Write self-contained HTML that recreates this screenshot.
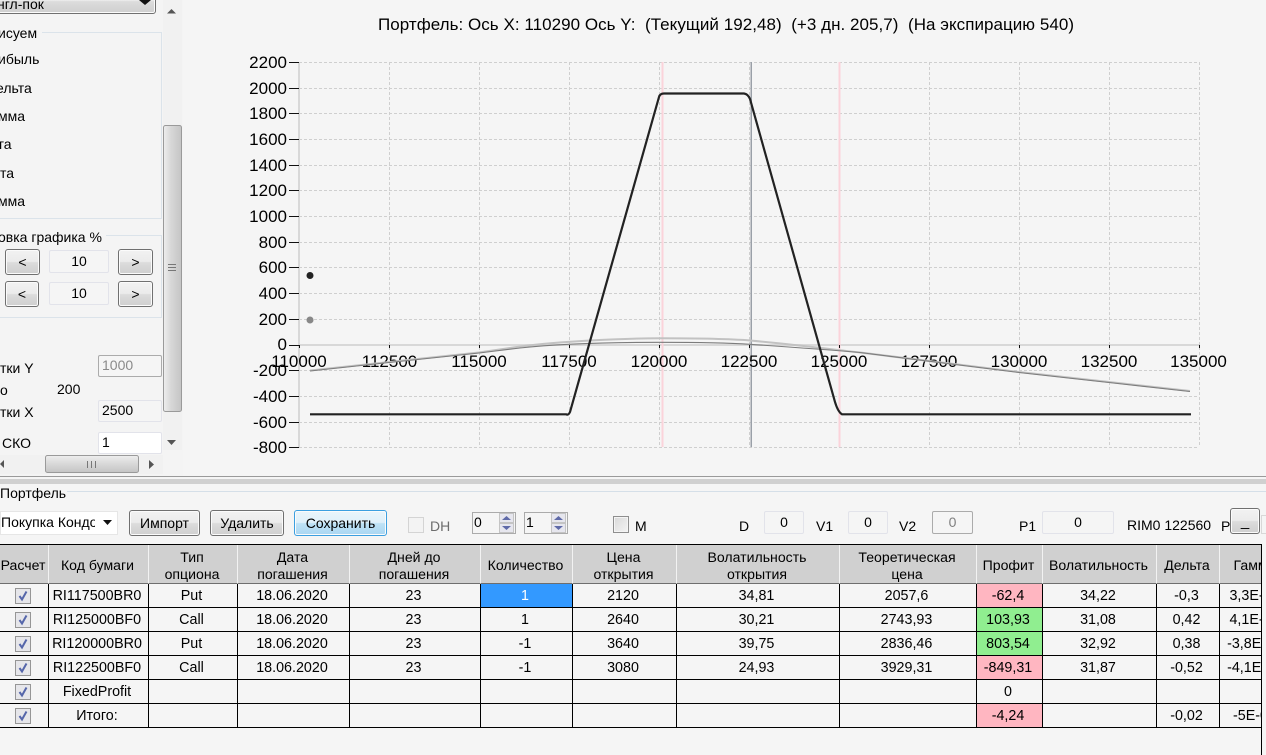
<!DOCTYPE html>
<html><head><meta charset="utf-8">
<style>
html,body{margin:0;padding:0;background:#f5f5f5;}
body{width:1266px;height:755px;overflow:hidden;position:relative;font:14px/16px "Liberation Sans",sans-serif;color:#000;}
.a{position:absolute;box-sizing:border-box;}
.t{position:absolute;white-space:nowrap;}
.btn{position:absolute;box-sizing:border-box;border:1px solid #707070;border-radius:3px;background:linear-gradient(#f2f2f2 0,#ebebeb 48%,#dcdcdc 52%,#cfcfcf 100%);text-align:center;box-shadow:inset 0 0 0 1px #fbfbfb;}
.box{position:absolute;box-sizing:border-box;border:1px solid #e2e3ea;border-radius:2px;background:#f5f5f5;text-align:center;}
table{border-collapse:separate;border-spacing:0;table-layout:fixed;position:absolute;left:0;top:0;width:1300px;}
td,th{box-sizing:border-box;padding:1px 3px 0 0;text-align:center;font-weight:normal;border-right:1px solid #000;border-bottom:1px solid #000;height:24px;overflow:hidden;white-space:nowrap;font-size:14.3px;line-height:17px;}
th{background:#d0d0d0;height:39px;padding:3px 2px 0 0;border-right:1px solid #f2f2f2;border-bottom:1px solid #6e6e6e;white-space:normal;font-size:14.1px;}
td.k{padding:0;}
.r{background:#ffb6c1}.g{background:#90ee90}.s{background:#3399ff;color:#fff}
.c{display:block;margin:0 auto;position:relative;left:-1px;}
</style></head><body>

<svg class="a" style="left:0;top:0" width="1266" height="476" font-family="Liberation Sans, sans-serif">
<text x="378" y="30" font-size="17" textLength="696" xml:space="preserve">Портфель: Ось X: 110290 Ось Y:  (Текущий 192,48)  (+3 дн. 205,7)  (На экспирацию 540)</text>
<g stroke="#cfcfcf" stroke-width="1" stroke-dasharray="3 2" fill="none" shape-rendering="crispEdges">
<path d="M299 62.500H1199M299 88.500H1199M299 113.500H1199M299 139.500H1199M299 165.500H1199M299 190.500H1199M299 216.500H1199M299 242.500H1199M299 267.500H1199M299 293.500H1199M299 319.500H1199M299 370.500H1199M299 396.500H1199M299 422.500H1199M299 447.500H1199"/>
<path d="M389.500 62V447M479.500 62V447M569.500 62V447M659.500 62V447M749.500 62V447M839.500 62V447M929.500 62V447M1019.500 62V447M1109.500 62V447M1199.500 62V447"/>
</g>
<rect x="298" y="62" width="2" height="385" fill="#d8d8d8"/>
<rect x="299" y="344" width="900" height="2" fill="#d8d8d8"/>
<rect x="661.500" y="62" width="2" height="385" fill="#fbd3da"/>
<rect x="838.500" y="62" width="2" height="385" fill="#fbd3da"/>
<rect x="750.500" y="62" width="1.500" height="385" fill="#9aa0a8"/>
<g stroke="#111" stroke-width="1" shape-rendering="crispEdges">
<path d="M289 62.500H299M289 88.500H299M289 113.500H299M289 139.500H299M289 165.500H299M289 190.500H299M289 216.500H299M289 242.500H299M289 267.500H299M289 293.500H299M289 319.500H299M289 345.500H299M289 370.500H299M289 396.500H299M289 422.500H299M289 447.500H299"/>
<path d="M299.500 345V348M389.500 345V348M479.500 345V348M569.500 345V348M659.500 345V348M749.500 345V348M839.500 345V348M929.500 345V348M1019.500 345V348M1109.500 345V348M1199.500 345V348"/>
</g>
<g font-size="17" text-anchor="end">
<text x="287" y="68">2200</text><text x="287" y="94">2000</text><text x="287" y="119">1800</text><text x="287" y="145">1600</text><text x="287" y="171">1400</text><text x="287" y="196">1200</text><text x="287" y="222">1000</text><text x="287" y="248">800</text><text x="287" y="273">600</text><text x="287" y="299">400</text><text x="287" y="325">200</text><text x="287" y="350">0</text><text x="287" y="376">-200</text><text x="287" y="402">-400</text><text x="287" y="428">-600</text><text x="287" y="453">-800</text>
</g>
<g font-size="17" text-anchor="middle">
<text x="299" y="367">110000</text><text x="389.500" y="367">112500</text><text x="479" y="367">115000</text><text x="569" y="367">117500</text><text x="659" y="367">120000</text><text x="749" y="367">122500</text><text x="839" y="367">125000</text><text x="929" y="367">127500</text><text x="1019" y="367">130000</text><text x="1109" y="367">132500</text><text x="1198.500" y="367">135000</text>
</g>
<path d="M310 370.500L389 362L479 352.500L520 346.500C560 341.500 620 338.300 660 338.300C700 338.300 730 339 750 340.500C790 344 825 348.500 860 352.500C920 360 970 366 1019 372L1109 382L1190 391" fill="none" stroke="#c2c2c2" stroke-width="2"/>
<path d="M310 371L389 362.500L479 353L520 348C560 343.500 620 342.300 660 342.300C700 342.300 730 343 750 344.300C790 347 825 349.500 860 352.500C920 360 970 366.500 1019 372.500L1109 382.500L1190 391.500" fill="none" stroke="#7c7c7c" stroke-width="1.100"/>
<path d="M310 414.300H566Q568.500 415.500 570 412L659 97Q660 93.500 664 93.500H744Q748 94 750 99L835 402Q838 412 842 414.300H1191" fill="none" stroke="#222" stroke-width="2.200"/>
<circle cx="310" cy="275.500" r="3.500" fill="#222"/>
<circle cx="310" cy="320" r="3.500" fill="#888"/>

<!-- left panel -->
<rect x="0" y="0" width="183" height="476" fill="#f4f4f4"/>
<rect x="163" y="0" width="19" height="450" fill="#f1f1f1"/>
<path d="M167 13.500H176L171.500 9Z" fill="#555"/>
<path d="M167 440H176L171.500 445Z" fill="#555"/>
<rect x="163.500" y="125.500" width="18" height="286" rx="2" fill="url(#sb)" stroke="#9a9a9a"/>
<path d="M168 264.500H176M168 267.500H176M168 270.500H176" stroke="#777" fill="none" shape-rendering="crispEdges"/>
<rect x="0" y="455" width="163" height="19" fill="#f1f1f1"/>
<path d="M4 460V468L0 464Z" fill="#555"/>
<path d="M149 460V469L154 464.500Z" fill="#555"/>
<rect x="45.500" y="455.500" width="93" height="17" rx="2" fill="url(#sh)" stroke="#9a9a9a"/>
<path d="M87.500 461V468M91.500 461V468M95.500 461V468" stroke="#777" fill="none" shape-rendering="crispEdges"/>
<defs>
<linearGradient id="sb" x1="0" x2="1" y1="0" y2="0"><stop offset="0" stop-color="#eee"/><stop offset=".4" stop-color="#d8d8d8"/><stop offset="1" stop-color="#c4c4c4"/></linearGradient>
<linearGradient id="sh" x1="0" x2="0" y1="0" y2="1"><stop offset="0" stop-color="#eee"/><stop offset=".4" stop-color="#dcdcdc"/><stop offset="1" stop-color="#c4c4c4"/></linearGradient>
</defs>
<path d="M42 32.500H161.500V218.500H0M106 235.500H161.500V317.500H0" fill="none" stroke="#dbe3ea" shape-rendering="crispEdges"/>
</svg>

<!-- left panel controls -->
<div class="btn" style="left:-6px;top:-12px;width:162px;height:26px;"></div>
<span class="t" style="left:-3px;top:-4px;">нгл-пок</span>
<svg class="a" style="left:139px;top:0" width="14" height="6"><path d="M0 0H12L6 5Z" fill="#111"/></svg>
<span class="t" style="left:-2px;top:25px">исуем</span>
<span class="t" style="left:-2px;top:51px">ибыль</span>
<span class="t" style="left:-4px;top:80px">ельта</span>
<span class="t" style="left:-2px;top:108px">мма</span>
<span class="t" style="left:-1px;top:136px">га</span>
<span class="t" style="left:0;top:165px">та</span>
<span class="t" style="left:-2px;top:193px">мма</span>
<span class="t" style="left:-2px;top:229px">овка графика %</span>
<div class="btn" style="left:5px;top:249px;width:35px;height:26px;line-height:24px">&lt;</div>
<div class="box" style="left:49px;top:250px;width:60px;height:23px;line-height:20px">10</div>
<div class="btn" style="left:118px;top:249px;width:35px;height:26px;line-height:24px">&gt;</div>
<div class="btn" style="left:5px;top:281px;width:34px;height:26px;line-height:24px">&lt;</div>
<div class="box" style="left:49px;top:282px;width:60px;height:23px;line-height:20px">10</div>
<div class="btn" style="left:118px;top:281px;width:35px;height:26px;line-height:24px">&gt;</div>
<span class="t" style="left:0;top:360px">тки Y</span>
<div class="box" style="left:98px;top:355px;width:64px;height:22px;border-color:#ababab;text-align:left;padding-left:3px;line-height:19px;color:#8a8a8a">1000</div>
<span class="t" style="left:0;top:382px">о</span>
<span class="t" style="left:57px;top:381px">200</span>
<span class="t" style="left:0;top:404px">тки X</span>
<div class="box" style="left:98px;top:400px;width:64px;height:22px;text-align:left;padding-left:3px;line-height:19px">2500</div>
<span class="t" style="left:2px;top:435px">СКО</span>
<div class="box" style="left:98px;top:432px;width:64px;height:22px;background:#fff;text-align:left;padding-left:3px;line-height:19px">1</div>

<!-- splitter -->
<div class="a" style="left:0;top:476px;width:1266px;height:1px;background:#9a9a9a"></div>
<div class="a" style="left:0;top:477px;width:1266px;height:2px;background:#f5f5f5"></div>
<div class="a" style="left:0;top:479px;width:1266px;height:5px;background:#d0d0d0"></div>

<!-- toolbar -->
<span class="t" style="left:0;top:485px">Портфель</span>
<div class="a" style="left:67px;top:491px;width:1199px;height:1px;background:#d5dfe8"></div>
<div class="a" style="left:0;top:511px;width:118px;height:24px;background:#fff;border:1px solid #e6e6e6;overflow:hidden;line-height:21px;"><span style="display:block;width:94px;overflow:hidden;white-space:nowrap;">Покупка Кондор</span></div>
<svg class="a" style="left:103px;top:520px" width="10" height="6"><path d="M0 0H9L4.500 5Z" fill="#111"/></svg>
<div class="btn" style="left:129px;top:510px;width:71px;height:26px;line-height:24px">Импорт</div>
<div class="btn" style="left:210px;top:510px;width:74px;height:26px;line-height:24px">Удалить</div>
<div class="btn" style="left:294px;top:510px;width:93px;height:26px;line-height:24px;border-color:#3c9fe0;background:linear-gradient(#eaf5fb,#dff0fa 48%,#bfe2f6 52%,#a9d6f2)">Сохранить</div>
<div class="a" style="left:408px;top:517px;width:16px;height:16px;border:1px solid #d4d4d4;background:#f3f3f3"></div>
<span class="t" style="left:430px;top:518px;color:#6d6d6d">DH</span>
<div class="a" style="left:472px;top:512px;width:44px;height:22px;border:1px solid #ababab;line-height:18px;padding-left:1px;">0</div>
<div class="a" style="left:524px;top:512px;width:44px;height:22px;border:1px solid #ababab;line-height:18px;padding-left:1px;">1</div>
<svg class="a" style="left:499px;top:513px" width="16" height="20"><rect x=".5" y=".5" width="14" height="9" fill="#e6e6ee" stroke="#c4c4c4"/><rect x=".5" y="10.500" width="14" height="9" fill="#e6e6ee" stroke="#c4c4c4"/><path d="M3 7H12L7.500 3ZM3 13H12L7.500 17Z" fill="#5f6aa8"/></svg>
<svg class="a" style="left:551px;top:513px" width="16" height="20"><rect x=".5" y=".5" width="14" height="9" fill="#e6e6ee" stroke="#c4c4c4"/><rect x=".5" y="10.500" width="14" height="9" fill="#e6e6ee" stroke="#c4c4c4"/><path d="M3 7H12L7.500 3ZM3 13H12L7.500 17Z" fill="#5f6aa8"/></svg>
<div class="a" style="left:613px;top:516px;width:16px;height:17px;border:1px solid #8e8e8e;background:linear-gradient(135deg,#d8d8d8,#f4f4f4);box-shadow:inset 0 0 0 1px #f4f4f4"></div>
<span class="t" style="left:635px;top:518px">M</span>
<span class="t" style="left:739px;top:518px">D</span>
<div class="box" style="left:764px;top:511px;width:40px;height:23px;line-height:20px">0</div>
<span class="t" style="left:816px;top:518px">V1</span>
<div class="box" style="left:848px;top:511px;width:40px;height:23px;line-height:20px">0</div>
<span class="t" style="left:899px;top:518px">V2</span>
<div class="box" style="left:932px;top:511px;width:41px;height:23px;line-height:20px;border-color:#ababab;color:#7f7f7f">0</div>
<span class="t" style="left:1019px;top:518px">P1</span>
<div class="box" style="left:1042px;top:511px;width:72px;height:23px;line-height:20px">0</div>
<span class="t" style="left:1127px;top:517px">RIM0 122560</span>
<span class="t" style="left:1221px;top:518px">P</span>
<div class="btn" style="left:1230px;top:508px;width:30px;height:26px;line-height:26px;font-size:15px;">_</div>
<div class="a" style="left:1261px;top:515px;width:5px;height:19px;border:1px solid #d8d8d8;border-right:0"></div>

<!-- table -->
<div class="a" style="left:0;top:544px;width:1262px;height:211px;border-top:1px solid #000;border-right:1px solid #000;overflow:hidden;">
<table>
<colgroup><col style="width:49px"><col style="width:100px"><col style="width:89px"><col style="width:112px"><col style="width:131px"><col style="width:92px"><col style="width:104px"><col style="width:163px"><col style="width:137px"><col style="width:66px"><col style="width:114px"><col style="width:63px"><col style="width:80px"></colgroup>
<tr><th>Расчет</th><th>Код бумаги</th><th>Тип<br>опциона</th><th>Дата<br>погашения</th><th>Дней до<br>погашения</th><th>Количество</th><th>Цена<br>открытия</th><th>Волатильность<br>открытия</th><th>Теоретическая<br>цена</th><th>Профит</th><th>Волатильность</th><th>Дельта</th><th style="padding-right:10px">Гамма</th></tr>
<tr><td class="k"><svg class="c" width="16" height="16"><rect x=".5" y=".5" width="15" height="15" fill="#e6e6ea" stroke="#969696"/><path d="M4.500 8L7 11.500L11.500 3.500" fill="none" stroke="#5566aa" stroke-width="2"/></svg></td><td>RI117500BR0</td><td>Put</td><td>18.06.2020</td><td>23</td><td class="s">1</td><td>2120</td><td>34,81</td><td>2057,6</td><td class="r">-62,4</td><td>34,22</td><td>-0,3</td><td style="padding-right:10px">3,3E-05</td></tr>
<tr><td class="k"><svg class="c" width="16" height="16"><rect x=".5" y=".5" width="15" height="15" fill="#e6e6ea" stroke="#969696"/><path d="M4.500 8L7 11.500L11.500 3.500" fill="none" stroke="#5566aa" stroke-width="2"/></svg></td><td>RI125000BF0</td><td>Call</td><td>18.06.2020</td><td>23</td><td>1</td><td>2640</td><td>30,21</td><td>2743,93</td><td class="g">103,93</td><td>31,08</td><td>0,42</td><td style="padding-right:10px">4,1E-05</td></tr>
<tr><td class="k"><svg class="c" width="16" height="16"><rect x=".5" y=".5" width="15" height="15" fill="#e6e6ea" stroke="#969696"/><path d="M4.500 8L7 11.500L11.500 3.500" fill="none" stroke="#5566aa" stroke-width="2"/></svg></td><td>RI120000BR0</td><td>Put</td><td>18.06.2020</td><td>23</td><td>-1</td><td>3640</td><td>39,75</td><td>2836,46</td><td class="g">803,54</td><td>32,92</td><td>0,38</td><td style="padding-right:10px">-3,8E-05</td></tr>
<tr><td class="k"><svg class="c" width="16" height="16"><rect x=".5" y=".5" width="15" height="15" fill="#e6e6ea" stroke="#969696"/><path d="M4.500 8L7 11.500L11.500 3.500" fill="none" stroke="#5566aa" stroke-width="2"/></svg></td><td>RI122500BF0</td><td>Call</td><td>18.06.2020</td><td>23</td><td>-1</td><td>3080</td><td>24,93</td><td>3929,31</td><td class="r">-849,31</td><td>31,87</td><td>-0,52</td><td style="padding-right:10px">-4,1E-05</td></tr>
<tr><td class="k"><svg class="c" width="16" height="16"><rect x=".5" y=".5" width="15" height="15" fill="#e6e6ea" stroke="#969696"/><path d="M4.500 8L7 11.500L11.500 3.500" fill="none" stroke="#5566aa" stroke-width="2"/></svg></td><td>FixedProfit</td><td></td><td></td><td></td><td></td><td></td><td></td><td></td><td>0</td><td></td><td></td><td></td></tr>
<tr><td class="k"><svg class="c" width="16" height="16"><rect x=".5" y=".5" width="15" height="15" fill="#e6e6ea" stroke="#969696"/><path d="M4.500 8L7 11.500L11.500 3.500" fill="none" stroke="#5566aa" stroke-width="2"/></svg></td><td>Итого:</td><td></td><td></td><td></td><td></td><td></td><td></td><td></td><td class="r">-4,24</td><td></td><td>-0,02</td><td style="padding-right:10px">-5E-07</td></tr>
</table>
</div>
</body></html>
